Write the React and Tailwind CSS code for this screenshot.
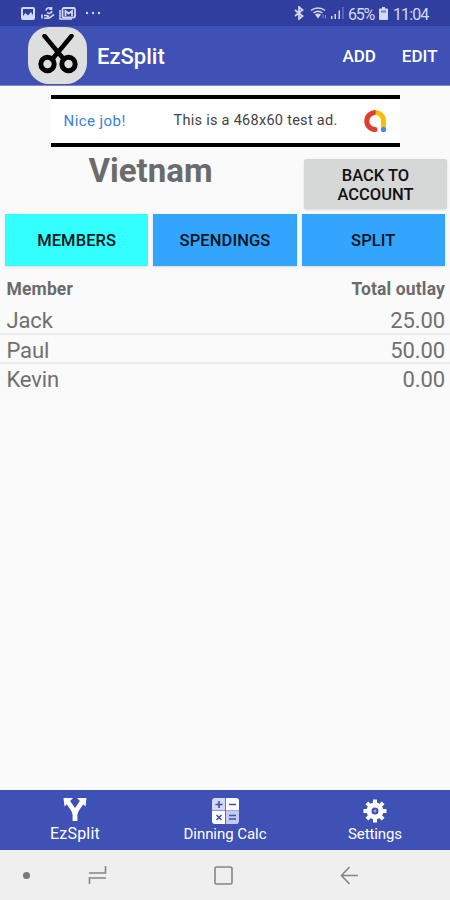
import { useState } from 'react';

const members = [
    { name: 'Jack', total: 25 },
    { name: 'Paul', total: 50 },
    { name: 'Kevin', total: 0 },
];

const tabs = ['MEMBERS', 'SPENDINGS', 'SPLIT'];

function StatusBar() {
    return (
        <div className="h-[26px] bg-[#303f9f] flex items-center text-[#d3d8f5]">
            <div className="flex items-center pl-[21px] w-[299px]">
                {/* Picture */}
                <svg width="14" height="13" viewBox="0 0 14 13" className="mr-[6px]">
                    <rect x="1" y="1" width="12" height="11" rx="1" fill="none" stroke="currentColor" strokeWidth="2" />
                    <path d="M2 9l2.500-3 2.500 2.500L10 5l3 5v1H2z" fill="currentColor" />
                </svg>
                {/* Sync hand */}
                <svg width="14" height="14" viewBox="0 0 14 14" className="mr-[4px]" fill="none" stroke="currentColor" strokeWidth="1.6">
                    <path d="M5 4.500a3 3 0 0 1 5-2M10.500 1v2.200H8.300M11 5a3 3 0 0 1-5 1.500" />
                    <path d="M1 8.500v4M3 9.500h3l2 1h-2.500M3 12.300h5l5-3.800" />
                </svg>
                {/* Mail stack */}
                <svg width="17" height="13" viewBox="0 0 17 13" className="mr-[9px]" fill="none" stroke="currentColor">
                    <path d="M1 3v9h12" strokeWidth="1.500" />
                    <rect x="3.500" y="1" width="12.500" height="9.500" rx="1.500" strokeWidth="1.800" />
                    <path d="M6.500 9V4l3.200 2.500L13 4v5" strokeWidth="1.800" />
                </svg>
                <svg width="16" height="4" viewBox="0 0 16 4" fill="currentColor">
                    <circle cx="2" cy="2" r="1.200" />
                    <circle cx="8" cy="2" r="1.200" />
                    <circle cx="14" cy="2" r="1.200" />
                </svg>
            </div>
            <div className="flex items-center h-full">
                <svg width="10" height="14" viewBox="0 0 10 14" className="ml-[-5px] mr-[6px]" fill="none" stroke="currentColor" strokeWidth="1.800">
                    <path d="M1 4l7.500 6L5 13V1l3.500 3L1 10" />
                </svg>
                <svg width="17" height="14" viewBox="0 0 17 14" className="mr-[4px]" fill="none" stroke="currentColor">
                    <path d="M1 4.500c4-3.500 10-3.500 14 0M3.500 7c3-2.300 6-2.300 9 0" strokeWidth="1.500" />
                    <path d="M5 8.500q3-2 6 0l-3 4z" fill="currentColor" stroke="none" />
                    <path d="M13 12V8.500M15.500 9v3.500" strokeWidth="1" opacity="0.500" />
                </svg>
                <svg width="13" height="12" viewBox="0 0 13 12" className="mr-[4px]" fill="currentColor">
                    <rect x="0" y="9" width="1.500" height="3" />
                    <rect x="3.500" y="7" width="1.500" height="5" />
                    <rect x="7.500" y="3.500" width="1.500" height="8.500" />
                    <rect x="11.500" y="0" width="1" height="12" opacity="0.500" />
                </svg>
                <span className="w-[31px] text-[16px] tracking-[-1.3px] leading-[26px] whitespace-nowrap pt-[3px]">65%</span>
                <svg width="9" height="13" viewBox="0 0 9 13" fill="currentColor">
                    <path d="M3 0h3v1.500h2a1 1 0 0 1 1 1V12a1 1 0 0 1-1 1H1a1 1 0 0 1-1-1V2.500a1 1 0 0 1 1-1h2z" />
                    <path d="M2 3.500h5v2H2z" fill="#7580c5" />
                </svg>
                <span className="ml-[5px] text-[16px] tracking-[-0.9px] leading-[26px] pt-[3px]">11:04</span>
            </div>
        </div>
    );
}

function Header() {
    return (
        <header className="h-[60px] bg-[#3f51b5] flex items-center text-white font-medium border-b border-[#8188ca]">
            <div className="ml-[28px] mb-px w-[59px] h-[57px] rounded-[21px] bg-[#dedede] flex items-center justify-center">
                {/* Scissors */}
                <svg width="40" height="42" viewBox="0 0 40 42" fill="none" stroke="#000">
                    <path d="M6.500 2l19.500 23.500M33.500 2L14 25.500" strokeWidth="4.500" strokeLinecap="round" />
                    <circle cx="9.500" cy="30" r="6.700" strokeWidth="5" />
                    <circle cx="30.500" cy="30" r="6.700" strokeWidth="5" />
                </svg>
            </div>
            <h1 className="ml-[10px] mt-[3px] text-[22px] leading-none">EzSplit</h1>
            <div className="ml-auto mt-[2px] pr-[12.500px] flex gap-[26px] text-[17px] leading-none">
                <button>ADD</button>
                <button>EDIT</button>
            </div>
        </header>
    );
}

function AdBanner() {
    return (
        <div className="mt-[9px] mx-auto w-[349px] h-[52px] bg-white border-y-4 border-black flex items-center">
            <span className="w-[123px] pl-[13px] text-[15px] tracking-[0.43px] text-[#3b7edb] whitespace-nowrap">Nice job!</span>
            <span className="w-[189px] text-[#444] text-[14.500px] tracking-[0.280px] whitespace-nowrap">This is a 468x60 test ad.</span>
            <svg width="24" height="24" viewBox="0 0 24 24" fill="none" strokeWidth="5">
                <path d="M12 3.500A8 8.500 0 0 1 20.500 12v7" stroke="#fbbc04" />
                <path d="M12.500 3.500A8.500 8.500 0 1 0 12 20.500" stroke="#e03c31" />
                <circle cx="12" cy="20.500" r="2.500" fill="#e03c31" />
                <circle cx="20.500" cy="20.500" r="2.600" fill="#4285f4" />
            </svg>
        </div>
    );
}

function BottomNav() {
    return (
        <nav className="h-[60px] bg-[#3f51b5] grid grid-cols-3 text-white text-[15px] leading-[18px] text-center">
            <div className="flex flex-col items-center pt-[7px]">
                {/* Fork */}
                <svg width="24" height="24" viewBox="0 0 24 24" fill="none" stroke="currentColor" strokeWidth="4.800">
                    <path d="M5 5l4.500 6.500Q12 15 12 18v6M19 5l-4.500 6.500Q12 15 12 18" />
                    <path d="M0.500 1H10L1.500 9.500zM23.500 1H14l8.500 8.500z" fill="currentColor" stroke="none" />
                </svg>
                <span className="mt-[4px] text-[16px] tracking-[0.200px]">EzSplit</span>
            </div>
            <div className="flex flex-col items-center pt-[8px]">
                <svg width="27" height="26" viewBox="0 0 27 26">
                    <path d="M3 0h10v12.500H0V3a3 3 0 0 1 3-3z" fill="#d3d8f4" />
                    <path d="M13.800 0H24a3 3 0 0 1 3 3v9.500H13.800z" fill="#fff" />
                    <path d="M0 13h13v13H3a3 3 0 0 1-3-3z" fill="#fff" />
                    <path d="M13.800 13H27v10a3 3 0 0 1-3 3H13.800z" fill="#c3caee" />
                    <path d="M3.500 6.500h7M7 3v7M17 6.500h7M4.500 17l5 5M9.500 17l-5 5M17 17.500h7M17 21h7" stroke="#3f51b5" strokeWidth="1.600" />
                </svg>
                <span className="mt-[1px] tracking-[-0.050px]">Dinning Calc</span>
            </div>
            <div className="flex flex-col items-center pt-[8px]">
                {/* Gear */}
                <svg width="26" height="26" viewBox="0 0 26 26" fill="none" stroke="currentColor">
                    <circle cx="13" cy="13" r="6" strokeWidth="5" />
                    <path d="M13 1.500v4M13 20.500v4M1.500 13h4M20.500 13h4M4.900 4.900l3 3M18.100 18.100l3 3M21.100 4.900l-3 3M7.900 18.100l-3 3" strokeWidth="4" />
                    <circle cx="13" cy="13" r="1" strokeWidth="1" opacity="0.600" />
                </svg>
                <span className="mt-[1px] tracking-[-0.100px]">Settings</span>
            </div>
        </nav>
    );
}

function SystemNav() {
    return (
        <div className="h-[50px] bg-[#efefef] flex items-center text-[#858585]">
            <div className="ml-[23px] w-[7px] h-[7px] rounded-full bg-[#777]" />
            <svg className="ml-[58px]" width="19" height="20" viewBox="0 0 19 20" fill="none" stroke="currentColor" strokeWidth="1.600">
                <path d="M1 8h16.500V1M18 13H1.500v6" />
            </svg>
            <svg className="ml-[107px]" width="19" height="19" viewBox="0 0 19 19" fill="none" stroke="currentColor" strokeWidth="1.600">
                <rect x="1" y="1" width="17" height="17" rx="1.500" />
            </svg>
            <svg className="ml-[107px]" width="19" height="19" viewBox="0 0 19 19" fill="none" stroke="currentColor" strokeWidth="1.600">
                <path d="M9.500 1L1.500 9.500l8 8.500M1.500 9.500H18" />
            </svg>
        </div>
    );
}

export default function App() {
    const [activeTab, setActiveTab] = useState('MEMBERS');

    return (
        <div className="w-[450px] h-[900px] flex flex-col bg-[#fafafa] overflow-hidden font-[Roboto,sans-serif]">
            <StatusBar />
            <Header />
            <main className="flex-1 flex flex-col">
                <AdBanner />

                {/* Account title */}
                <div className="flex mt-[6px] pr-[3px]">
                    <h2 className="w-[304px] pr-[3px] text-center text-[33px] leading-[36px] font-bold text-[#6b6b6b]">Vietnam</h2>
                    <button className="mt-[6px] w-[143px] h-[50px] pt-[2px] rounded-[2px] bg-[#d6d7d7] shadow-sm text-[16.500px] leading-[19px] font-medium text-[#111]">
                        BACK TO<br />ACCOUNT
                    </button>
                </div>

                {/* Tabs */}
                <div className="mt-[5px] pl-[5px] pr-[5px] grid grid-cols-3 gap-[5px]">
                    {tabs.map((tab) => (
                        <button
                            key={tab}
                            onClick={() => setActiveTab(tab)}
                            className={`h-[52px] pt-[3px] text-[16.5px] tracking-[0.100px] font-medium text-[#0b1520] shadow-sm ${activeTab === tab ? 'bg-[#33ffff]' : 'bg-[#33a5ff]'}`}
                        >
                            {tab}
                        </button>
                    ))}
                </div>

                <div className="mt-[9px] h-[28px] pl-[6.500px] pr-[5px] flex justify-between text-[17.5px] tracking-[0.150px] leading-[28px] font-bold text-[#6b6b6b]">
                    <span>Member</span>
                    <span>Total outlay</span>
                </div>
                <div className="mt-[2px] text-[22px] text-[#707070]">
                    {members.map((m) => (
                        <div key={m.name} className="h-[29.500px] pl-[6.500px] pr-[5px] flex justify-between leading-[32px] border-b-2 border-[#ececec] last:border-b-0">
                            <span className="tracking-[-0.150px]">{m.name}</span>
                            <span className="tracking-[-0.100px]">{m.total.toFixed(2)}</span>
                        </div>
                    ))}
                </div>
            </main>
            <BottomNav />
            <SystemNav />
        </div>
    );
}
